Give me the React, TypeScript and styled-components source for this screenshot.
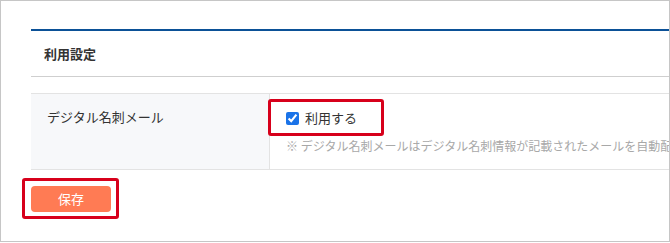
import React, { ReactElement } from 'react';
import styled, { createGlobalStyle } from 'styled-components';

const GlobalStyle = createGlobalStyle`
  body {
    margin: 0;
    background: #ffffff;
    font-family: 'Noto Sans CJK JP', 'Noto Sans', sans-serif;
  }
`;

const Frame = styled.div`
  box-sizing: border-box;
  width: 670px;
  height: 242px;
  border: 1px solid #c6c6c6;
  padding: 28px 0 0 30px;
  overflow: hidden;
  background: #ffffff;
`;

const Section = styled.section`
  width: calc(100% + 20px);
  border-top: 2px solid #0b5197;
`;

const SectionHeader = styled.h2`
  margin: 0;
  height: 45px;
  display: flex;
  align-items: center;
  padding-left: 13px;
  font-size: 13px;
  font-weight: bold;
  color: #333333;
  border-bottom: 1px solid #cfcfcf;
`;

const SettingsTable = styled.div`
  margin-top: 16px;
  display: grid;
  grid-template-columns: 239px 1fr;
  border-top: 1px solid #e3e3e3;
  border-bottom: 1px solid #e3e3e3;
`;

const LabelCell = styled.div`
  padding: 13px 16px;
  line-height: 20px;
  font-size: 13px;
  color: #333333;
  background: #f7f8fa;
  border-right: 1px solid #e3e3e3;
`;

const ValueCell = styled.div`
  display: flex;
  flex-direction: column;
  align-items: flex-start;
  padding: 14px 17px 14px 16px;
`;

const CheckLabel = styled.label`
  position: relative;
  display: flex;
  align-items: center;
  gap: 6px;
  height: 20px;
  line-height: 20px;
  font-size: 13px;
  color: #333333;
`;

const Checkbox = styled.input`
  width: 13px;
  height: 13px;
  margin: 0;
  accent-color: #1a73e8;
`;

const Hint = styled.p`
  margin: 9px 0 0;
  height: 18px;
  line-height: 18px;
  font-size: 12px;
  color: #a8a8a8;
  white-space: nowrap;
`;

const Footer = styled.div`
  display: flex;
  padding-top: 16px;
`;

const ButtonWrap = styled.div`
  position: relative;
`;

const SaveButton = styled.button`
  display: block;
  width: 80px;
  height: 26px;
  padding: 0;
  border: none;
  border-radius: 4px;
  background: #ff7b54;
  color: #ffffff;
  font-family: inherit;
  font-size: 13px;
  line-height: 26px;
  cursor: pointer;
`;

const Annotation = styled.span<{ $left: number; $top: number; $w: number; $h: number }>`
  position: absolute;
  left: ${(p) => p.$left}px;
  top: ${(p) => p.$top}px;
  width: ${(p) => p.$w}px;
  height: ${(p) => p.$h}px;
  box-sizing: border-box;
  border: 3px solid #d7001b;
  border-radius: 3px;
  pointer-events: none;
`;

export default function App(): ReactElement {
  return (
    <>
      <GlobalStyle />
      <Frame>
        <Section>
          <SectionHeader>利用設定</SectionHeader>
          <SettingsTable>
            <LabelCell>デジタル名刺メール</LabelCell>
            <ValueCell>
              <CheckLabel>
                <Checkbox type="checkbox" defaultChecked />
                利用する
                <Annotation $left={-18} $top={-9} $w={116} $h={37} />
              </CheckLabel>
              <Hint>※ デジタル名刺メールはデジタル名刺情報が記載されたメールを自動配信する機能です。</Hint>
            </ValueCell>
          </SettingsTable>
        </Section>
        <Footer>
          <ButtonWrap>
            <SaveButton>保存</SaveButton>
            <Annotation $left={-9} $top={-8} $w={97} $h={41} />
          </ButtonWrap>
        </Footer>
      </Frame>
    </>
  );
}
